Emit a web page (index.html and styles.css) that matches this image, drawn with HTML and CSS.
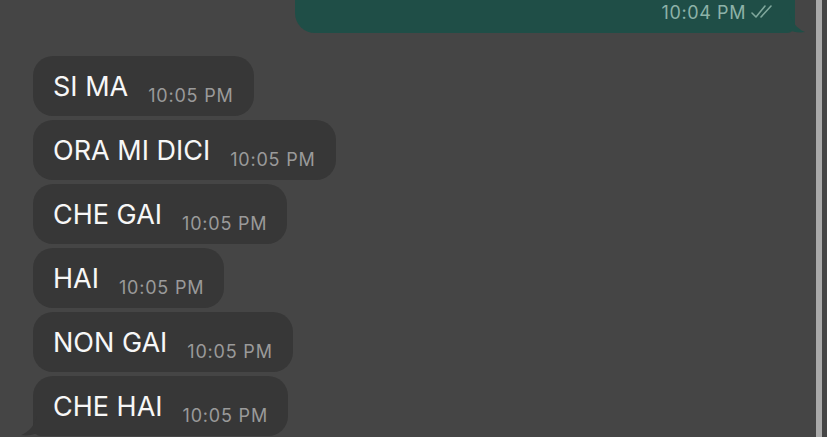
FILE: index.html
```html
<!DOCTYPE html>
<html lang="it">
<head>
    <meta charset="UTF-8">
    <meta name="viewport" content="width=device-width, initial-scale=1.0">
    <title>Chat</title>
    <link rel="stylesheet" href="styles.css">
</head>
<body>
    <div class="screen">
        <div class="chat">
            <!-- outgoing message, mostly scrolled out of view -->
            <div class="bubble-out">
                <span class="time-out">10:04 PM</span>
                <svg class="ticks" width="26" height="16" viewBox="0 0 26 16">
                    <path d="M2 9 L6 13 L15 2" fill="none" stroke="#7fa79c" stroke-width="1.6" stroke-linecap="round" stroke-linejoin="round"/>
                    <path d="M11 13 L21 2" fill="none" stroke="#7fa79c" stroke-width="1.6" stroke-linecap="round"/>
                </svg>
                <svg class="tail-out" width="18" height="22" viewBox="0 0 18 22">
                    <path d="M0 0 C2 10 8 18 16 21 C10 22 4 21 0 19 Z" fill="#1f4e47"/>
                </svg>
            </div>

            <div class="messages">
                <div class="bubble"><span class="text">SI MA</span><span class="time">10:05 PM</span></div>
                <div class="bubble"><span class="text">ORA MI DICI</span><span class="time">10:05 PM</span></div>
                <div class="bubble"><span class="text">CHE GAI</span><span class="time">10:05 PM</span></div>
                <div class="bubble"><span class="text">HAI</span><span class="time">10:05 PM</span></div>
                <div class="bubble"><span class="text">NON GAI</span><span class="time">10:05 PM</span></div>
                <div class="bubble last">
                    <svg class="tail-in" width="18" height="20" viewBox="0 0 18 20">
                        <path d="M18 0 C16 9 10 16 2 19 C8 20 14 19 18 17 Z" fill="#373737"/>
                    </svg>
                    <span class="text">CHE HAI</span><span class="time">10:05 PM</span>
                </div>
            </div>
        </div>
        <div class="scrollbar"></div>
    </div>
</body>
</html>
```

FILE: styles.css
```css
body {
    margin: 0;
    padding: 0;
    background-color: #454545;
    font-family: Inter, "Liberation Sans", Arial, sans-serif;
    overflow: hidden;
}
.screen {
    display: flex;
    height: 437px;
}
.chat {
    width: 816px;
    display: flex;
    flex-direction: column;
}
.scrollbar {
    width: 6px;
    background-color: #a9a9a9;
}
/* outgoing bubble */
.bubble-out {
    position: relative;
    align-self: flex-end;
    margin-right: 21px;
    margin-top: -27px;
    width: 500px;
    height: 60px;
    box-sizing: border-box;
    background-color: #1f4e47;
    border-radius: 20px;
    border-bottom-right-radius: 8px;
    display: flex;
    justify-content: flex-end;
    align-items: flex-end;
    padding: 0 19px 11px 0;
    gap: 4px;
}
.time-out {
    font-size: 18px;
    line-height: 18px;
    letter-spacing: 0.6px;
    color: #8db2a8;
}
.ticks {
    margin-bottom: 2px;
}
.tail-out {
    position: absolute;
    right: -12px;
    bottom: 0;
}
/* incoming bubbles */
.messages {
    margin-top: 23px;
    display: flex;
    flex-direction: column;
    align-items: flex-start;
    gap: 4px;
    padding-left: 33px;
}
.bubble {
    position: relative;
    height: 60px;
    box-sizing: border-box;
    background-color: #373737;
    border-radius: 20px;
    display: flex;
    align-items: flex-end;
    gap: 20px;
    padding: 0 20px 11px 20px;
}
.bubble.last {
    border-bottom-left-radius: 8px;
}
.text {
    font-size: 27px;
    line-height: 30px;
    color: #f7f7f7;
    padding-bottom: 3px;
}
.time {
    font-size: 18px;
    line-height: 18px;
    letter-spacing: 0.8px;
    color: #9a9a9a;
}
.tail-in {
    position: absolute;
    left: -14px;
    bottom: 0;
}
```
